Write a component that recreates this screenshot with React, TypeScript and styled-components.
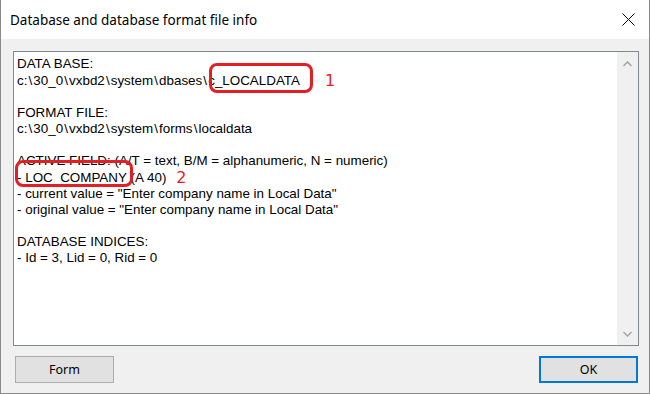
import React from "react";
import styled, { createGlobalStyle } from "styled-components";

const GlobalStyle = createGlobalStyle`
  html, body { margin: 0; padding: 0; background: #ffffff; }
  * { box-sizing: border-box; }
`;

const Window = styled.div`
  width: 650px;
  height: 394px;
  display: flex;
  flex-direction: column;
  border: 1px solid #8a8a8a;
  border-top: none;
  background: #f0f0f0;
  font-family: "Liberation Sans", Arial, sans-serif;
`;

const TitleBar = styled.div`
  height: 39px;
  background: #ffffff;
  display: flex;
  align-items: center;
  justify-content: space-between;
  padding-left: 9px;
`;

const Title = styled.span`
  font-family: "Noto Sans", "Open Sans", sans-serif;
  font-size: 13.5px;
  color: #000;
  margin-top: 1px;
`;

const CloseButton = styled.div`
  width: 46px;
  height: 39px;
  display: flex;
  align-items: center;
  justify-content: center;
  margin-right: -2px;
`;

const Body = styled.div`
  flex: 1;
  display: flex;
  flex-direction: column;
  padding: 12px 10px 0 12px;
`;

const TextBox = styled.div`
  height: 295px;
  border: 1px solid #828790;
  background: #ffffff;
  display: flex;
`;

const Content = styled.div`
  flex: 1;
  padding: 4px 0 0 3px;
  font-size: 13.4px;
  line-height: 16.2px;
  color: #000;
  white-space: pre;
`;

const Line = styled.div`
  height: 16.2px;
`;

const Sep = styled.span`
  margin: 0 1.1px;
`;

const Scrollbar = styled.div`
  width: 21px;
  background: #f0f0f0;
  display: flex;
  flex-direction: column;
  justify-content: space-between;
  align-items: center;
  padding: 9px 0 8px;
`;

const Mark = styled.span<{ $l: number; $r: number; $t: number; $b: number }>`
  position: relative;
  &::after {
    content: "";
    position: absolute;
    left: ${(p) => p.$l}px;
    right: ${(p) => p.$r}px;
    top: ${(p) => p.$t}px;
    bottom: ${(p) => p.$b}px;
    border: 3.5px solid #e41e25;
    border-radius: 8px;
  }
`;

const Num = styled.span<{ $dx: number }>`
  font-family: "DejaVu Sans", sans-serif;
  font-size: 16px;
  color: #e41e25;
  position: relative;
  left: ${(p) => p.$dx}px;
  top: 1px;
`;

const Footer = styled.div`
  display: flex;
  justify-content: space-between;
  padding: 10px 1px 0 2px;
`;

const Button = styled.div<{ $default?: boolean }>`
  width: 99px;
  height: 27px;
  display: flex;
  align-items: center;
  justify-content: center;
  background: #e1e1e1;
  border: ${(p) => (p.$default ? "2px solid #0078d7" : "1px solid #adadad")};
  font-family: "Noto Sans", "Open Sans", sans-serif;
  font-size: 12.5px;
  color: #000;
`;

const Chevron = ({ up }: { up?: boolean }) => (
  <svg width="9" height="6" viewBox="0 0 9 6">
    <path
      d={up ? "M0.5 5 L4.5 1 L8.5 5" : "M0.5 1 L4.5 5 L8.5 1"}
      fill="none"
      stroke="#a3a3a3"
      strokeWidth="1.5"
    />
  </svg>
);

const PathText = ({ text }: { text: string }) => {
  const parts = text.split("\\");
  return (
    <>
      {parts.map((p, i) => (
        <React.Fragment key={i}>
          {i > 0 && <Sep>\</Sep>}
          {p}
        </React.Fragment>
      ))}
    </>
  );
};

export default function App() {
  return (
    <>
      <GlobalStyle />
      <Window>
        <TitleBar>
          <Title>Database and database format file info</Title>
          <CloseButton>
            <svg width="13" height="13" viewBox="0 0 13 13">
              <path d="M0.5 0.5 L12.5 12.5 M12.5 0.5 L0.5 12.5" stroke="#000" strokeWidth="1" />
            </svg>
          </CloseButton>
        </TitleBar>
        <Body>
          <TextBox>
            <Content>
              <Line>DATA BASE:</Line>
              <Line>
                <PathText text={"c:\\30_0\\vxbd2\\system\\dbases\\c"} />
                <Mark $l={-6} $r={-13} $t={-10} $b={-5}>_LOCALDATA</Mark>
                <Num $dx={25}>1</Num>
              </Line>
              <Line />
              <Line>FORMAT FILE:</Line>
              <Line>
                <PathText text={"c:\\30_0\\vxbd2\\system\\forms\\localdata"} />
              </Line>
              <Line />
              <Line>ACTIVE FIELD: (A/T = text, B/M = alphanumeric, N = numeric)</Line>
              <Line>
                - <Mark $l={-10} $r={-6} $t={-10} $b={-2}>LOC_COMPANY</Mark> (A 40)
                <Num $dx={10}>2</Num>
              </Line>
              <Line>- current value = "Enter company name in Local Data"</Line>
              <Line>- original value = "Enter company name in Local Data"</Line>
              <Line />
              <Line>DATABASE INDICES:</Line>
              <Line>- Id = 3, Lid = 0, Rid = 0</Line>
            </Content>
            <Scrollbar>
              <Chevron up />
              <Chevron />
            </Scrollbar>
          </TextBox>
          <Footer>
            <Button>Form</Button>
            <Button $default>OK</Button>
          </Footer>
        </Body>
      </Window>
    </>
  );
}
